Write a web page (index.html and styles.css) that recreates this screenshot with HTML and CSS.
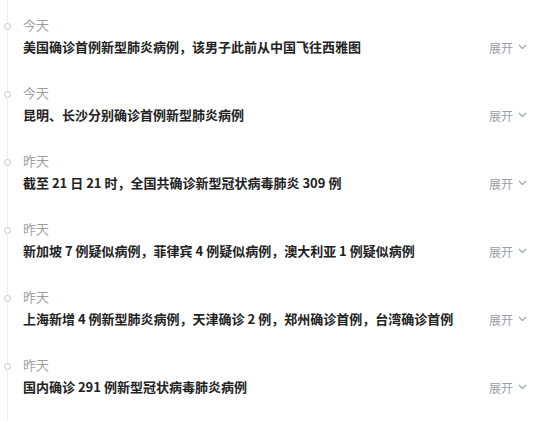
FILE: index.html
```html
<!DOCTYPE html>
<html lang="zh">
<head>
<meta charset="utf-8">
<link rel="stylesheet" href="styles.css">
</head>
<body>
<div class="timeline">
  <div class="item">
    <div class="date"><span class="dot"></span>今天</div>
    <div class="row"><div class="title">美国确诊首例新型肺炎病例，该男子此前从中国飞往西雅图</div><div class="more">展开<svg width="9" height="6" viewBox="0 0 9 6"><path d="M1 1l3.5 3.5L8 1" fill="none" stroke="#9aa0a8" stroke-width="1.1"/></svg></div></div>
  </div>
  <div class="item">
    <div class="date"><span class="dot"></span>今天</div>
    <div class="row"><div class="title">昆明、长沙分别确诊首例新型肺炎病例</div><div class="more">展开<svg width="9" height="6" viewBox="0 0 9 6"><path d="M1 1l3.5 3.5L8 1" fill="none" stroke="#9aa0a8" stroke-width="1.1"/></svg></div></div>
  </div>
  <div class="item">
    <div class="date"><span class="dot"></span>昨天</div>
    <div class="row"><div class="title">截至 21 日 21 时，全国共确诊新型冠状病毒肺炎 309 例</div><div class="more">展开<svg width="9" height="6" viewBox="0 0 9 6"><path d="M1 1l3.5 3.5L8 1" fill="none" stroke="#9aa0a8" stroke-width="1.1"/></svg></div></div>
  </div>
  <div class="item">
    <div class="date"><span class="dot"></span>昨天</div>
    <div class="row"><div class="title">新加坡 7 例疑似病例，菲律宾 4 例疑似病例，澳大利亚 1 例疑似病例</div><div class="more">展开<svg width="9" height="6" viewBox="0 0 9 6"><path d="M1 1l3.5 3.5L8 1" fill="none" stroke="#9aa0a8" stroke-width="1.1"/></svg></div></div>
  </div>
  <div class="item">
    <div class="date"><span class="dot"></span>昨天</div>
    <div class="row"><div class="title">上海新增 4 例新型肺炎病例，天津确诊 2 例，郑州确诊首例，台湾确诊首例</div><div class="more">展开<svg width="9" height="6" viewBox="0 0 9 6"><path d="M1 1l3.5 3.5L8 1" fill="none" stroke="#9aa0a8" stroke-width="1.1"/></svg></div></div>
  </div>
  <div class="item">
    <div class="date"><span class="dot"></span>昨天</div>
    <div class="row"><div class="title">国内确诊 291 例新型冠状病毒肺炎病例</div><div class="more">展开<svg width="9" height="6" viewBox="0 0 9 6"><path d="M1 1l3.5 3.5L8 1" fill="none" stroke="#9aa0a8" stroke-width="1.1"/></svg></div></div>
  </div>
</div>
</body>
</html>
```
FILE: styles.css
```css
html, body {
  margin: 0;
  padding: 0;
  background: #fff;
}
body {
  font-family: "Microsoft YaHei", "Noto Sans CJK SC", "Noto Sans", sans-serif;
  width: 547px;
  height: 421px;
  overflow: hidden;
}
.timeline {
  position: relative;
  margin-left: 7px;
  border-left: 1px solid #eeeeee;
  padding: 14px 0 0 15px;
  height: 407px;
}
.item {
  height: 68px;
}
.date {
  position: relative;
  font-size: 13px;
  line-height: 22px;
  height: 22px;
  color: #a0a0a0;
}
.dot {
  position: absolute;
  left: -19px;
  top: 9px;
  width: 5px;
  height: 5px;
  border: 1px solid #c8c8c8;
  border-radius: 50%;
  background: #fff;
}
.row {
  display: flex;
  align-items: center;
  justify-content: space-between;
  height: 22px;
  padding-right: 20px;
}
.title {
  font-size: 13px;
  font-weight: bold;
  color: #222;
  line-height: 22px;
}
.more {
  display: flex;
  align-items: center;
  gap: 5px;
  font-size: 12px;
  color: #9aa0a8;
}
```
